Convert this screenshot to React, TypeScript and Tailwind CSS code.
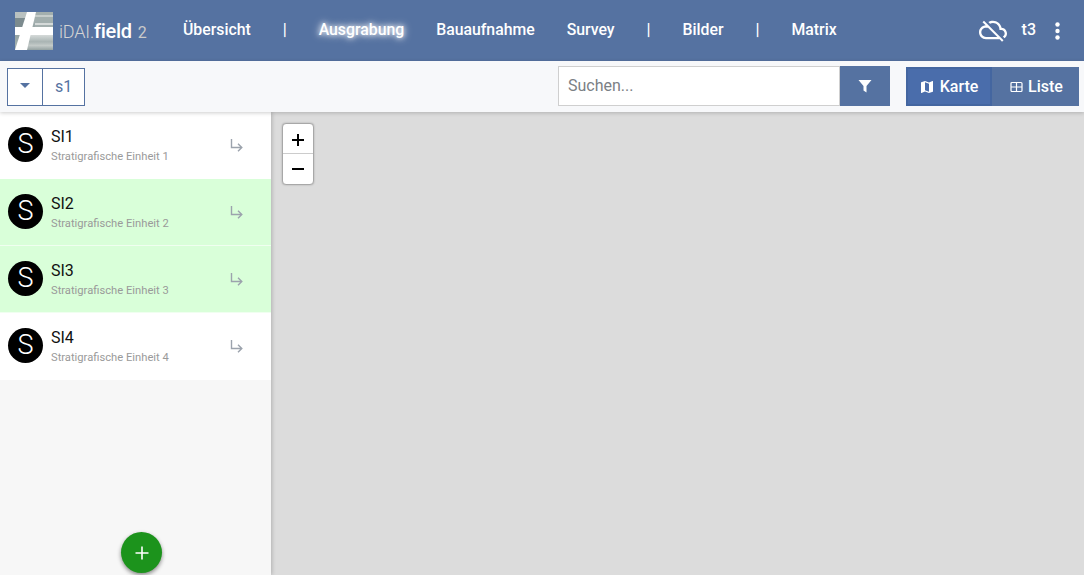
import React from "react";

function Logo() {
  return (
    <svg width="38" height="38" viewBox="0 0 38 38" className="shrink-0">
      <defs>
        <linearGradient id="g1" x1="0" y1="0" x2="0" y2="1">
          <stop offset="0" stopColor="#b8c1c0" />
          <stop offset="0.5" stopColor="#8f9e9f" />
          <stop offset="1" stopColor="#a9b5b3" />
        </linearGradient>
        <linearGradient id="g2" x1="0" y1="0" x2="0" y2="1">
          <stop offset="0" stopColor="#d5dad9" />
          <stop offset="0.45" stopColor="#a9b4b3" />
          <stop offset="0.7" stopColor="#c3cac8" />
          <stop offset="1" stopColor="#94a1a1" />
        </linearGradient>
      </defs>
      <rect width="38" height="38" fill="url(#g1)" />
      <rect x="20" y="0" width="18" height="15" fill="#a3afae" />
      <rect x="20" y="3" width="18" height="2" fill="#c6cdcb" />
      <rect x="20" y="11" width="18" height="2" fill="#d5dad9" />
      <rect x="0" y="6" width="11" height="9" fill="#7c8b8f" />
      <rect x="0" y="0" width="14" height="6" fill="#b9c1c0" />
      <rect x="12" y="23" width="26" height="15" fill="url(#g2)" />
      <polygon points="12,0 21,0 12,38 0,38" fill="#ffffff" />
      <rect x="0" y="15" width="38" height="8" fill="#ffffff" />
    </svg>
  );
}

function Sep() {
  return <span className="text-[16px] font-medium text-white">|</span>;
}

function Row({ name, sub, green }: { name: string; sub: string; green?: boolean }) {
  return (
    <div className={"h-[67px] flex items-center pl-2 pr-[28px] border-b border-white/60 " + (green ? "bg-[#d9ffd9]" : "bg-white")}>
      <div className="w-[35px] h-[35px] rounded-full bg-black text-white flex items-center justify-center text-[27px] font-light leading-none shrink-0 -mt-[1px]">
        S
      </div>
      <div className="ml-2 flex-1">
        <div className="text-[16px] leading-[19px] text-[#111]">{name}</div>
        <div className="text-[11.2px] leading-[14px] mt-[4px] text-[#9a9a9a]">{sub}</div>
      </div>
      <svg width="13" height="14" viewBox="0 0 13 14" fill="none" stroke="#9ca3ad" strokeWidth="1.4" className="-mt-[1px]">
        <path d="M1.5 1V9.5H11.5M8 5.8L11.8 9.5L8 13.2" />
      </svg>
    </div>
  );
}

export default function App() {
  return (
    <div className="w-[1084px] h-[575px] overflow-hidden flex flex-col font-['Roboto',sans-serif] bg-[#dcdcdc]">
      <header className="h-[61px] bg-[#5572a1] flex items-center shrink-0 pl-[15px] pr-[24px] text-white">
        <Logo />
        <div className="ml-[6px] flex items-baseline w-[124px] text-[18px] leading-none">
          <span className="font-light text-[#d4d4d4] tracking-[-0.2px]">iDAI.</span>
          <span className="font-medium text-[20px] text-white tracking-[-0.3px]">field</span>
          <span className="ml-[6px] text-[#cacaca] text-[16px]">2</span>
        </div>
        <nav className="flex items-center text-[15.8px] font-medium -mt-[1px]">
          <span>Übersicht</span>
          <span className="ml-[32px]"><Sep /></span>
          <span className="ml-[32px] [text-shadow:0_0_8px_rgba(255,255,255,1),0_0_5px_rgba(255,255,255,0.8)]">Ausgrabung</span>
          <span className="ml-[32px]">Bauaufnahme</span>
          <span className="ml-[32px]">Survey</span>
          <span className="ml-[32px]"><Sep /></span>
          <span className="ml-[32px]">Bilder</span>
          <span className="ml-[32px]"><Sep /></span>
          <span className="ml-[32px]">Matrix</span>
        </nav>
        <div className="ml-auto flex items-center">
          <svg width="28" height="28" viewBox="0 0 24 24" fill="#fff" className="-mt-[2px]">
            <path d="M19.35,10.03C18.67,6.59 15.64,4 12,4C10.52,4 9.15,4.43 8,5.17L9.46,6.63C10.22,6.23 11.08,6 12,6C15.04,6 17.5,8.46 17.5,11.5V12H19C20.66,12 22,13.34 22,15C22,16.13 21.36,17.11 20.44,17.62L21.89,19.07C23.16,18.16 24,16.68 24,15C24,12.36 21.95,10.22 19.35,10.03M3,5.27L5.75,8C2.56,8.15 0,10.77 0,14C0,17.31 2.69,20 6,20H17.73L19.73,22L21,20.73L4.27,4M7.73,10L15.73,18H6C3.79,18 2,16.21 2,14C2,11.79 3.79,10 6,10H7.73Z" />
          </svg>
          <span className="ml-[15px] text-[16px] font-medium -mt-[1px]">t3</span>
          <svg width="5" height="18" viewBox="0 0 5 18" fill="#fff" className="ml-[19px]">
            <circle cx="2.5" cy="2.5" r="2.2" />
            <circle cx="2.5" cy="9" r="2.2" />
            <circle cx="2.5" cy="15.5" r="2.2" />
          </svg>
        </div>
      </header>

      <div className="h-[51px] bg-[#f7f8fa] shrink-0 flex items-center pl-[7px] pr-[5px] shadow-[0_1px_4px_rgba(0,0,0,0.2)] relative z-10">
        <div className="flex h-[38px] border border-[#5572a1] bg-white">
          <div className="w-[35px] border-r border-[#5572a1] flex items-center justify-center">
            <span className="w-0 h-0 border-l-[5px] border-r-[5px] border-t-[5px] border-l-transparent border-r-transparent border-t-[#5572a1] -mt-[2px]" />
          </div>
          <div className="w-[41px] flex items-center justify-center text-[16px] text-[#5572a1]">s1</div>
        </div>
        <div className="ml-auto flex h-[40px] -mt-[1px]">
          <div className="w-[282px] border border-[#cfcfcf] bg-white flex items-center pl-[9px] text-[16px] text-[#7b8085]">Suchen...</div>
          <div className="w-[50px] bg-[#5572a1] flex items-center justify-center">
            <svg width="14" height="14" viewBox="0 0 14 14" fill="#fff">
              <path d="M0.5 1H13.5L8.5 7V13.5L5.5 11.5V7Z" />
            </svg>
          </div>
        </div>
        <div className="ml-4 flex h-[39px] bg-[#5572a1] text-white text-[16px] font-medium">
          <div className="w-[86px] bg-[#4a6dab] border-2 border-[#4466a0] flex items-center justify-center gap-[6px]">
            <svg width="16" height="16" viewBox="0 0 24 24" fill="#fff" className="-mx-[1px]">
              <path d="M15,19L9,16.89V5L15,7.11M20.5,3C20.44,3 20.39,3 20.34,3L15,5.1L9,3L3.36,4.9C3.15,4.97 3,5.15 3,5.38V20.5A0.5,0.5 0 0,0 3.5,21C3.55,21 3.61,21 3.66,21L9,18.9L15,21L20.64,19.1C20.85,19 21,18.85 21,18.62V3.5A0.5,0.5 0 0,0 20.5,3Z" />
            </svg>
            <span>Karte</span>
          </div>
          <div className="w-[87px] flex items-center justify-center gap-[5px] pl-[2px]">
            <svg width="13" height="12" viewBox="0 0 13 12" fill="none" stroke="#fff" strokeWidth="1.2">
              <rect x="1" y="1.5" width="11" height="9" rx="1" />
              <path d="M1 6H12M6.5 1.5V10.5" />
            </svg>
            <span>Liste</span>
          </div>
        </div>
      </div>

      <div className="flex-1 flex min-h-0">
        <aside className="w-[271px] bg-[#f7f7f7] flex flex-col relative shadow-[1px_0_4px_rgba(0,0,0,0.2)] z-[5] shrink-0">
          <Row name="SI1" sub="Stratigrafische Einheit 1" />
          <Row name="SI2" sub="Stratigrafische Einheit 2" green />
          <Row name="SI3" sub="Stratigrafische Einheit 3" green />
          <Row name="SI4" sub="Stratigrafische Einheit 4" />
          <div className="absolute left-[121px] top-[420px] w-[41px] h-[41px] rounded-full bg-[#1c931c] shadow-[0_2px_4px_rgba(0,0,0,0.45)] flex items-center justify-center">
            <svg width="14" height="14" viewBox="0 0 14 14" stroke="#fff" strokeWidth="1.6">
              <path d="M0.5 7H13.5M7 0.5V13.5" />
            </svg>
          </div>
        </aside>
        <main className="flex-1 bg-[#dcdcdc] pl-[11px] pt-[11px]">
          <div className="w-[32px] h-[62px] rounded-[4px] bg-white border border-[#a8a8a8] flex flex-col shadow-[0_0_2px_rgba(0,0,0,0.25)]">
            <div className="h-[30px] border-b border-[#ccc] flex items-center justify-center">
              <svg width="12" height="12" viewBox="0 0 12 12" stroke="#000" strokeWidth="2" className="mt-[2px]"><path d="M0 6H12M6 0V12" /></svg>
            </div>
            <div className="flex-1 flex items-center justify-center">
              <svg width="12" height="2" viewBox="0 0 12 2" stroke="#000" strokeWidth="2"><path d="M0 1H12" /></svg>
            </div>
          </div>
        </main>
      </div>
    </div>
  );
}
